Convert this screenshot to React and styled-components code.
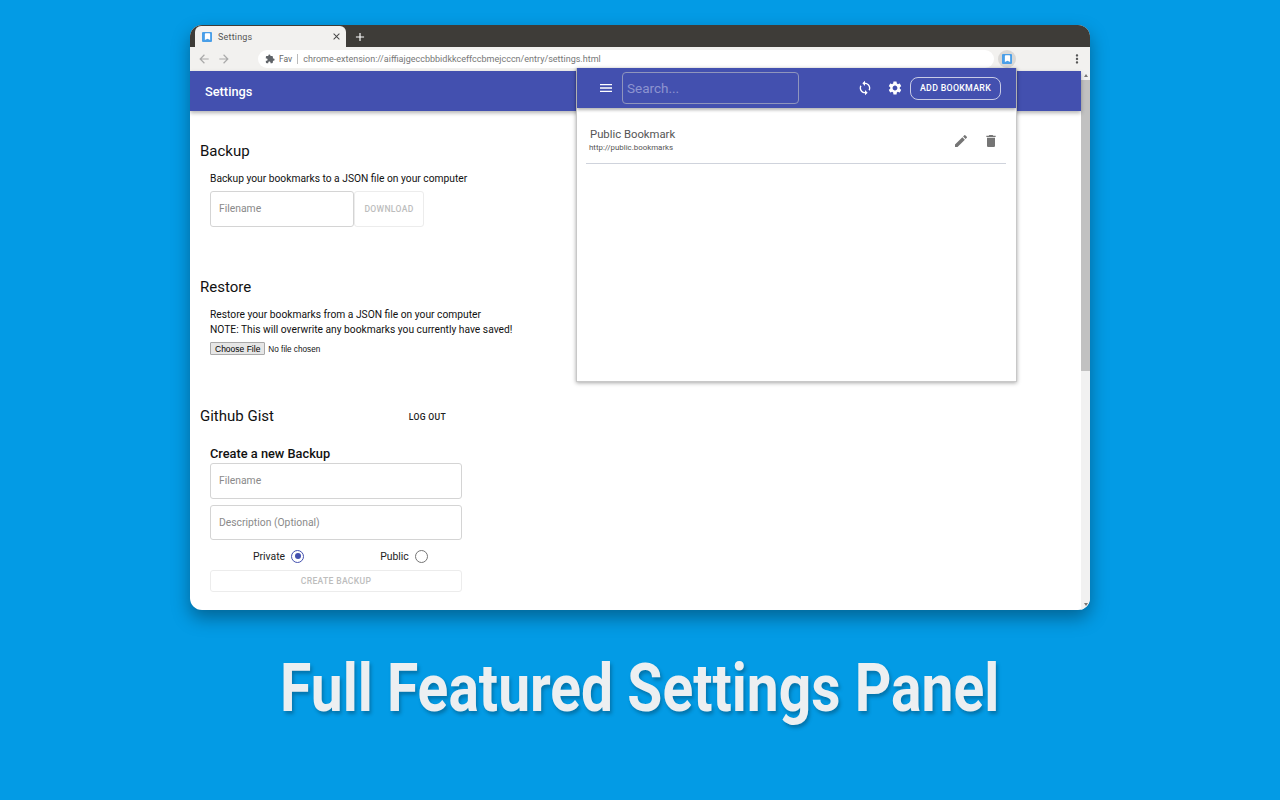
import styled, { createGlobalStyle } from "styled-components";
import {
  MdAdd,
  MdArrowBack,
  MdArrowForward,
  MdBookmark,
  MdClose,
  MdDelete,
  MdEdit,
  MdExtension,
  MdMenu,
  MdMoreVert,
  MdSettings,
  MdSync,
} from "react-icons/md";

const GlobalStyle = createGlobalStyle`
  html, body {
    margin: 0;
    padding: 0;
    height: 100%;
    overflow: hidden;
    background: #039be5;
    font-family: Roboto, "Liberation Sans", sans-serif;
  }
  * {
    box-sizing: border-box;
  }
`;

const ExtIcon = () => (
  <ExtIconBox>
    <MdBookmark size={9} color="#fff" />
  </ExtIconBox>
);

const App = () => {
  return (
    <Page>
      <GlobalStyle />
      <Window>
        <TabStrip>
          <Tab>
            <ExtIcon />
            <TabTitle>Settings</TabTitle>
            <MdClose size={11} color="#444" />
          </Tab>
          <NewTab>
            <MdAdd size={14} color="#fff" />
          </NewTab>
        </TabStrip>
        <Toolbar>
          <MdArrowBack size={14} color="#a9a9a9" />
          <MdArrowForward size={14} color="#a9a9a9" />
          <Omnibox>
            <MdExtension size={10} color="#5f6368" />
            <Fav>Fav</Fav>
            <Url>chrome-extension://aiffiajgeccbbbidkkceffccbmejcccn/entry/settings.html</Url>
          </Omnibox>
          <ExtButton>
            <ExtIcon />
          </ExtButton>
          <MdMoreVert size={14} color="#555" />
        </Toolbar>
        <AppBar>Settings</AppBar>
        <Body>
          <Content>
            <Section $height={136}>
              <Heading>Backup</Heading>
              <Indent>
                <Line>Backup your bookmarks to a JSON file on your computer</Line>
                <FieldRow>
                  <Field $width={144} placeholder="Filename" />
                  <DisabledButton $width={70}>Download</DisabledButton>
                </FieldRow>
              </Indent>
            </Section>
            <Section $height={129}>
              <Heading>Restore</Heading>
              <Indent>
                <Line>Restore your bookmarks from a JSON file on your computer</Line>
                <Line>NOTE: This will overwrite any bookmarks you currently have saved!</Line>
                <FileInput type="file" />
              </Indent>
            </Section>
            <GistHead>
              <Heading>Github Gist</Heading>
              <LogOut>Log out</LogOut>
            </GistHead>
            <Indent>
              <SubHeading>Create a new Backup</SubHeading>
              <Stack>
                <Field $width={252} placeholder="Filename" />
                <Field $width={252} $height={35} placeholder="Description (Optional)" />
              </Stack>
              <RadioRow>
                <RadioLabel>
                  Private <Radio $checked />
                </RadioLabel>
                <RadioLabel>
                  Public <Radio />
                </RadioLabel>
              </RadioRow>
              <DisabledButton $width={252} $height={22}>
                Create backup
              </DisabledButton>
            </Indent>
          </Content>
          <Scrollbar>
            <ScrollArrow />
            <ScrollThumb />
            <ScrollArrow $down />
          </Scrollbar>
        </Body>
        <Popup>
          <PopupBar>
            <MdMenu size={16} color="#fff" />
            <Search placeholder="Search..." />
            <BarIcons>
              <MdSync size={16} color="#fff" />
              <MdSettings size={16} color="#fff" />
            </BarIcons>
            <AddButton>Add bookmark</AddButton>
          </PopupBar>
          <BookmarkRow>
            <BookmarkText>
              <BookmarkName>Public Bookmark</BookmarkName>
              <BookmarkUrl>http://public.bookmarks</BookmarkUrl>
            </BookmarkText>
            <MdEdit size={16} color="#757575" />
            <MdDelete size={16} color="#757575" />
          </BookmarkRow>
        </Popup>
      </Window>
      <Caption>Full Featured Settings Panel</Caption>
    </Page>
  );
};

export default App;

const Page = styled.div`
  display: flex;
  flex-direction: column;
  align-items: center;
  height: 800px;
  padding-top: 25px;
  background: #039be5;
`;

const Window = styled.div`
  position: relative;
  display: flex;
  flex-direction: column;
  width: 900px;
  height: 585px;
  border-radius: 12px;
  overflow: hidden;
  background: #fff;
  box-shadow: 0 8px 18px rgba(0, 0, 0, 0.35);
`;

const TabStrip = styled.div`
  display: flex;
  align-items: flex-end;
  height: 22px;
  padding-left: 5px;
  background: #3e3c38;
`;

const Tab = styled.div`
  display: flex;
  align-items: center;
  width: 151px;
  height: 21px;
  padding: 0 4px 0 7px;
  border-radius: 6px 6px 0 0;
  background: #f2f1ef;
`;

const TabTitle = styled.span`
  flex: 1;
  margin-left: 6px;
  font-size: 9px;
  letter-spacing: 0.2px;
  color: #555;
`;

const NewTab = styled.div`
  display: flex;
  align-items: center;
  margin-left: 7px;
  height: 21px;
`;

const ExtIconBox = styled.span`
  display: flex;
  align-items: center;
  justify-content: center;
  width: 10px;
  height: 10px;
  border-radius: 1px;
  background: #4a9fe8;
`;

const Toolbar = styled.div`
  display: flex;
  align-items: center;
  gap: 6px;
  height: 24px;
  padding: 0 6px 1px 7px;
  background: #f2f1ef;
`;

const Omnibox = styled.div`
  display: flex;
  align-items: center;
  flex: 1;
  height: 18px;
  margin-left: 21px;
  padding-left: 7px;
  border-radius: 9px;
  background: #fff;
`;

const Fav = styled.span`
  margin-left: 4px;
  padding-right: 5px;
  border-right: 1px solid #bbb;
  font-size: 8.5px;
  line-height: 10px;
  color: #666;
`;

const Url = styled.span`
  margin-left: 5px;
  font-size: 9.02px;
  color: #777;
  white-space: nowrap;
`;

const ExtButton = styled.div`
  display: flex;
  align-items: center;
  justify-content: center;
  width: 18px;
  height: 18px;
  margin: 0 48px 0 -2px;
  border-radius: 50%;
  background: #d9d8d6;
`;

const AppBar = styled.div`
  z-index: 1;
  display: flex;
  align-items: center;
  width: 891px;
  height: 40px;
  padding-left: 15px;
  font-size: 12.8px;
  font-weight: 500;
  color: #fff;
  background: #4350af;
  box-shadow: 0 2px 4px rgba(0, 0, 0, 0.3);
`;

const Body = styled.div`
  display: flex;
  flex: 1;
  min-height: 0;
  margin-top: -41px;
`;

const Content = styled.div`
  flex: 1;
  padding: 72px 0 0 10px;
  color: #111;
`;

const Section = styled.section`
  height: ${(p) => p.$height}px;
`;

const Heading = styled.h2`
  margin: 0 0 11px;
  font-size: 15px;
  font-weight: 400;
  line-height: 18px;
  color: #111;
`;

const Indent = styled.div`
  padding-left: 10px;
`;

const Line = styled.p`
  margin: 0;
  font-size: 10.25px;
  line-height: 15px;
`;

const FieldRow = styled.div`
  display: flex;
  margin-top: 5px;
`;

const Stack = styled.div`
  display: flex;
  flex-direction: column;
  gap: 6px;
`;

const Field = styled.input`
  width: ${(p) => p.$width}px;
  height: ${(p) => p.$height || 36}px;
  padding: 0 8px 1px;
  border: 1px solid #d4d4d4;
  border-radius: 3px;
  outline: none;
  font-family: Roboto, sans-serif;
  font-size: 10.35px;
  &::placeholder {
    color: #8a8a8a;
    opacity: 1;
  }
`;

const DisabledButton = styled.button`
  display: block;
  width: ${(p) => p.$width}px;
  height: ${(p) => p.$height || 36}px;
  padding: 0;
  border: 1px solid #ececec;
  border-radius: 3px;
  background: #fff;
  font-family: Roboto, sans-serif;
  font-size: 8.6px;
  font-weight: 500;
  letter-spacing: 0.3px;
  text-transform: uppercase;
  color: #bdbdbd;
`;

const FileInput = styled.input`
  display: block;
  margin-top: 5px;
  font-family: "Liberation Sans", sans-serif;
  font-size: 8.2px;
  color: #111;
  &::file-selector-button {
    height: 13px;
    padding: 0 4px;
    margin-right: 3px;
    border: 1px solid #a9a9a9;
    border-radius: 1px;
    background: #e6e6e6;
    font-size: 8.5px;
  }
`;

const GistHead = styled.div`
  display: flex;
  justify-content: space-between;
  width: 246px;
  height: 38px;
`;

const LogOut = styled.span`
  margin-top: 5px;
  font-size: 8.6px;
  font-weight: 500;
  letter-spacing: 0.3px;
  text-transform: uppercase;
  color: #222;
`;

const SubHeading = styled.h3`
  margin: 0 0 1px;
  padding-top: 1px;
  height: 17px;
  font-size: 12.8px;
  font-weight: 500;
  line-height: 16px;
  color: #111;
`;

const RadioRow = styled.div`
  display: flex;
  align-items: center;
  gap: 76px;
  width: 252px;
  height: 30px;
  padding: 2px 0 0 43px;
`;

const RadioLabel = styled.label`
  display: flex;
  align-items: center;
  gap: 6px;
  font-size: 10.4px;
  color: #222;
`;

const Radio = styled.span`
  display: flex;
  align-items: center;
  justify-content: center;
  width: 13px;
  height: 13px;
  border: 1.5px solid ${(p) => (p.$checked ? "#4350af" : "#757575")};
  border-radius: 50%;
  &::after {
    content: "";
    width: 6px;
    height: 6px;
    border-radius: 50%;
    background: ${(p) => (p.$checked ? "#4350af" : "transparent")};
  }
`;

const Scrollbar = styled.div`
  display: flex;
  flex-direction: column;
  align-items: center;
  width: 9px;
  background: #f1f1f1;
`;

const ScrollArrow = styled.span`
  width: 0;
  height: 0;
  margin: ${(p) => (p.$down ? "auto 0 4px" : "4px 0 3px")};
  border: 2.5px solid transparent;
  ${(p) =>
    p.$down
      ? "border-bottom: 0; border-top: 3px solid #777;"
      : "border-top: 0; border-bottom: 3px solid #777;"}
`;

const ScrollThumb = styled.div`
  width: 100%;
  height: 291px;
  background: #c1c1c1;
`;

const Popup = styled.div`
  position: absolute;
  z-index: 2;
  top: 43px;
  left: 386px;
  width: 441px;
  height: 314px;
  background: #fff;
  border: 1px solid #c8c8c8;
  border-top: 0;
  box-shadow: 0 1px 4px rgba(0, 0, 0, 0.35);
`;

const PopupBar = styled.div`
  display: flex;
  align-items: center;
  height: 40px;
  padding: 0 15px 0 21px;
  background: #4350af;
  box-shadow: 0 2px 3px rgba(0, 0, 0, 0.3);
`;

const Search = styled.input`
  width: 177px;
  height: 32px;
  margin-left: 8px;
  padding: 0 4px;
  border: 1.5px solid #8f95bd;
  border-radius: 4px;
  outline: none;
  background: transparent;
  font-family: Roboto, sans-serif;
  font-size: 13.5px;
  &::placeholder {
    color: #8d94d0;
    opacity: 1;
  }
`;

const BarIcons = styled.div`
  display: flex;
  gap: 14px;
  margin-left: auto;
  margin-right: 7px;
`;

const AddButton = styled.button`
  width: 91px;
  height: 23px;
  padding: 0;
  border: 1px solid #c8cbe6;
  border-radius: 8px;
  background: transparent;
  font-family: Roboto, sans-serif;
  font-size: 8.8px;
  font-weight: 500;
  letter-spacing: 0.3px;
  text-transform: uppercase;
  color: #fff;
`;

const BookmarkRow = styled.div`
  display: flex;
  align-items: center;
  gap: 14px;
  height: 56px;
  margin: 0 10px 0 9px;
  padding: 10px 7px 0 3px;
  border-bottom: 1px solid #cfd3dc;
`;

const BookmarkText = styled.div`
  flex: 1;
`;

const BookmarkName = styled.div`
  padding-left: 1px;
  font-size: 11.3px;
  line-height: 15px;
  color: #555;
`;

const BookmarkUrl = styled.div`
  font-size: 7.9px;
  line-height: 12px;
  color: #555;
`;

const Caption = styled.h1`
  margin: 46px 0 0;
  font-family: Roboto, sans-serif;
  font-size: 66px;
  font-weight: 700;
  line-height: 66px;
  white-space: nowrap;
  color: #eceff1;
  text-shadow: 2px 3px 4px rgba(0, 0, 0, 0.25);
  transform: scaleX(0.863);
`;
